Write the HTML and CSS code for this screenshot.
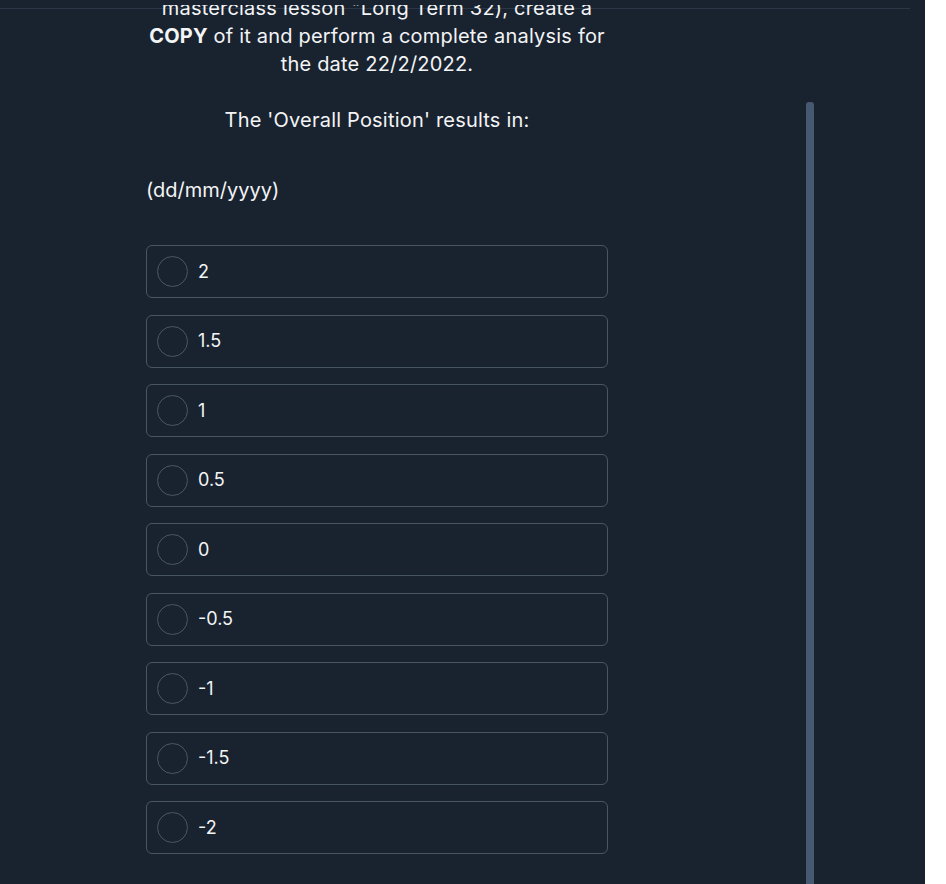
FILE: index.html
```html
<!DOCTYPE html>
<html lang="en">
<head>
    <meta charset="UTF-8">
    <meta name="viewport" content="width=device-width, initial-scale=1.0">
    <title>Question</title>
    <link rel="stylesheet" href="styles.css">
</head>
<body>
    <div class="panel">
        <div class="scroller">
            <div class="content">
                <p class="question">
                    masterclass lesson "Long Term 32), create a<br>
                    <b>COPY</b> of it and perform a complete analysis for<br>
                    the date 22/2/2022.<br>
                    <br>
                    The 'Overall Position' results in:
                </p>
                <p class="hint">(dd/mm/yyyy)</p>
                <ul class="options">
                    <li class="option"><span class="radio"></span><span class="label">2</span></li>
                    <li class="option"><span class="radio"></span><span class="label">1.5</span></li>
                    <li class="option"><span class="radio"></span><span class="label">1</span></li>
                    <li class="option"><span class="radio"></span><span class="label">0.5</span></li>
                    <li class="option"><span class="radio"></span><span class="label">0</span></li>
                    <li class="option"><span class="radio"></span><span class="label">-0.5</span></li>
                    <li class="option"><span class="radio"></span><span class="label">-1</span></li>
                    <li class="option"><span class="radio"></span><span class="label">-1.5</span></li>
                    <li class="option"><span class="radio"></span><span class="label">-2</span></li>
                </ul>
            </div>
        </div>
        <div class="scrollbar"></div>
    </div>
</body>
</html>
```
FILE: styles.css
```css
body {
    margin: 0;
    padding: 0;
    background: #fff;
    font-family: Inter, "Noto Sans", sans-serif;
}

.panel {
    position: relative;
    width: 925px;
    height: 884px;
    box-sizing: border-box;
    padding-top: 5px;
    background: #19232f;
    overflow: hidden;
    color: #f3f4f6;
}

/* header rule, sits under the scrolled text */
.panel::before {
    content: "";
    position: absolute;
    left: 0;
    top: 8px;
    width: 910px;
    height: 1px;
    background: #2b3746;
}

.scroller {
    position: relative;
    height: 100%;
    overflow: hidden;
}

.content {
    width: 462px;
    margin-left: 146px;
    margin-top: -11px;
}

.question {
    margin: 0;
    font-size: 20px;
    line-height: 28px;
    letter-spacing: 0.2px;
    text-align: center;
}

.question b {
    font-weight: 700;
}

.hint {
    margin: 42px 0 0;
    font-size: 20px;
    line-height: 28px;
}

.options {
    list-style: none;
    margin: 41px 0 0;
    padding: 0;
    display: flex;
    flex-direction: column;
    gap: 16.5px;
}

.option {
    display: flex;
    align-items: center;
    gap: 10px;
    height: 53px;
    box-sizing: border-box;
    padding-left: 10px;
    border: 1px solid #485563;
    border-radius: 6px;
}

.radio {
    width: 29px;
    height: 29px;
    border: 1px solid #4b5665;
    border-radius: 50%;
}

.label {
    font-size: 18px;
    line-height: 20px;
}

.scrollbar {
    position: absolute;
    left: 806px;
    top: 102px;
    bottom: 0;
    width: 8px;
    border-radius: 3px 3px 0 0;
    background: #475871;
}
```
